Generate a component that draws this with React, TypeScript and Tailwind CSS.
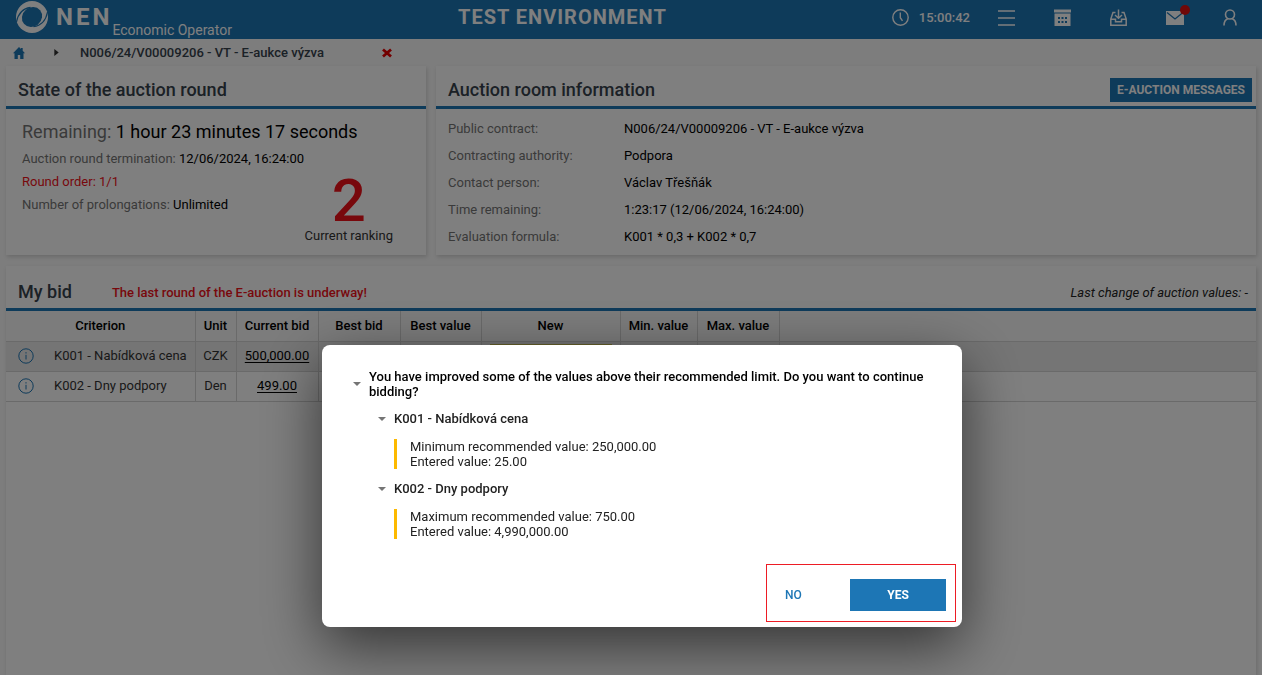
import React, { useState } from 'react';

type BidRow = {
    id: string;
    criterion: string;
    unit: string;
    current: string;
    entered: string;
};

type Warning = {
    title: string;
    limit: string;
    entered: string;
};

const CONTRACT = 'N006/24/V00009206 - VT - E-aukce výzva';

const ROOM_INFO = [
    { label: 'Public contract:', value: CONTRACT },
    { label: 'Contracting authority:', value: 'Podpora' },
    { label: 'Contact person:', value: 'Václav Třešňák' },
    { label: 'Time remaining:', value: '1:23:17 (12/06/2024, 16:24:00)' },
    { label: 'Evaluation formula:', value: 'K001 * 0,3 + K002 * 0,7' },
];

const BID_ROWS: BidRow[] = [
    { id: 'K001', criterion: 'K001 - Nabídková cena', unit: 'CZK', current: '500,000.00', entered: '25.00' },
    { id: 'K002', criterion: 'K002 - Dny podpory', unit: 'Den', current: '499.00', entered: '4,990,000.00' },
];

const WARNINGS: Warning[] = [
    {
        title: 'K001 - Nabídková cena',
        limit: 'Minimum recommended value: 250,000.00',
        entered: 'Entered value: 25.00',
    },
    {
        title: 'K002 - Dny podpory',
        limit: 'Maximum recommended value: 750.00',
        entered: 'Entered value: 4,990,000.00',
    },
];

const Logo = () => (
    <svg className="h-8 w-8" viewBox="0 0 32 32" aria-hidden="true">
        <circle cx="16" cy="16" r="16" fill="currentColor" />
        <ellipse cx="16" cy="16" rx="10.500" ry="9.500" transform="rotate(-40 16 16)" fill="#1d76b5" />
        <path
            d="M0.500 21C2 13 6 7.500 14.500 6.300M31.500 11C30 19 26 24.500 17.500 25.700"
            fill="none"
            stroke="#1d76b5"
            strokeWidth="1.200"
        />
    </svg>
);

const ClockIcon = () => (
    <svg className="h-[17px] w-[17px]" viewBox="0 0 17 17" fill="none" stroke="currentColor" strokeWidth="1.400" aria-hidden="true">
        <circle cx="8.500" cy="8.500" r="7.700" />
        <path d="M8.300 3.500v5.200l2.200 3.200" />
    </svg>
);

const MenuIcon = () => (
    <svg className="h-[17px] w-[17px]" viewBox="0 0 17 17" fill="none" stroke="currentColor" strokeWidth="1.500" aria-hidden="true">
        <path d="M0 2h17M0 9h17M0 16h17" />
    </svg>
);

const CalendarIcon = () => (
    <svg className="h-[17px] w-[17px]" viewBox="0 0 17 17" fill="currentColor" aria-hidden="true">
        <path d="M0 .500h17v3H0z" />
        <path
            fillRule="evenodd"
            d="M.500 4.500h16V17H.500zM4 8v2h2V8zm3.500 0v2h2V8zM11 8v2h2V8zM4 12v2h2v-2zm3.500 0v2h2v-2zM11 12v2h2v-2z"
        />
    </svg>
);

const InboxIcon = () => (
    <svg className="h-[17px] w-[17px]" viewBox="0 0 17 17" fill="none" stroke="currentColor" strokeWidth="1.500" aria-hidden="true">
        <path d="M5.500 3.500H3L.8 10v6.200h15.400V10L14 3.500h-2.500M.8 10.200h4.700v2.500h6v-2.500h4.700" />
        <path d="M8.500 .500v8.500M5 6l3.500 3.300L12 6" />
    </svg>
);

const MailIcon = () => (
    <svg className="h-[14px] w-[18px]" viewBox="0 0 18 14" fill="currentColor" aria-hidden="true">
        <path d="M0 0h18v14H0z" />
        <path d="M1 1.500l8 6.500 8-6.500" fill="none" stroke="#1d76b5" strokeWidth="1.300" />
    </svg>
);

const UserIcon = () => (
    <svg className="h-[17px] w-[14px]" viewBox="0 0 14 17" fill="none" stroke="currentColor" strokeWidth="1.600" aria-hidden="true">
        <circle cx="7" cy="5.500" r="4.500" />
        <path d="M1 16.500c0-3.500 1.600-6 4-7M13 16.500c0-3.500-1.600-6-4-7" />
    </svg>
);

const HomeIcon = () => (
    <svg className="h-3 w-3" viewBox="0 0 12 12" fill="currentColor" aria-hidden="true">
        <path d="M6 0l2 2V1h1.700v2.700L12 6.200h-1.500V12H7.200V8H4.800v4H1.500V6.200H0z" />
    </svg>
);

const CloseIcon = () => (
    <svg className="h-[10px] w-[10px]" viewBox="0 0 10 10" stroke="currentColor" strokeWidth="2.800" aria-hidden="true">
        <path d="M1 1.500l8 7M9 1.500l-8 7" />
    </svg>
);

const InfoIcon = () => (
    <svg className="h-4 w-4" viewBox="0 0 16 16" fill="none" stroke="currentColor" aria-hidden="true">
        <circle cx="8" cy="8" r="7.200" />
        <path d="M8 6.800v4.700M8 4.200v1.300" />
    </svg>
);

const Caret = () => (
    <svg className="h-1 w-2 shrink-0" viewBox="0 0 8 4" fill="#757575" aria-hidden="true">
        <path d="M0 0h8L4 4z" />
    </svg>
);

const Header = () => (
    <header className="flex h-[39px] shrink-0 items-center bg-[#1d76b5] text-white">
        <div className="flex h-full w-[458px] items-start pt-px pl-4">
            <Logo />
            <span className="ml-2 text-[24px] leading-8 font-bold tracking-[3px]">NEN</span>
            <span className="mt-[19px] text-[14px] leading-5">Economic Operator</span>
        </div>
        <div className="mb-1.5 text-[20px] leading-6 font-bold tracking-wider">TEST ENVIRONMENT</div>
        <div className="mb-1 flex flex-1 items-center justify-end pr-[25px]">
            <ClockIcon />
            <time className="ml-[10px] text-[13px] font-medium">15:00:42</time>
            <nav className="ml-7 flex items-center gap-[39px]">
                <button aria-label="Menu"><MenuIcon /></button>
                <button aria-label="Calendar"><CalendarIcon /></button>
                <button aria-label="Inbox"><InboxIcon /></button>
                <button aria-label="Messages" className="relative">
                    <MailIcon />
                    <span className="absolute -top-1.5 -right-1.5 h-2.5 w-2.5 rounded-full bg-[#e01010]" />
                </button>
                <button aria-label="User"><UserIcon /></button>
            </nav>
        </div>
    </header>
);

const Breadcrumb = () => (
    <nav className="flex h-[27px] shrink-0 items-center pl-[13px]">
        <a href="#" aria-label="Home" className="text-[#1d76b5]"><HomeIcon /></a>
        <svg className="ml-[29px] h-[7px] w-[5px]" viewBox="0 0 5 8" fill="#333" aria-hidden="true">
            <path d="M0 0l5 4-5 4z" />
        </svg>
        <a href="#" className="ml-[21px] font-medium text-[#37424d]">{CONTRACT}</a>
        <button aria-label="Close" className="ml-[58px] text-[#e60000]"><CloseIcon /></button>
    </nav>
);

const StatePanel = () => (
    <section className="flex w-[420px] shrink-0 flex-col bg-white shadow-[1px_2px_4px_rgba(0,0,0,0.15)]">
        <h2 className="flex h-[43px] items-center border-b-3 border-[#1d76b5] px-3 pt-1.5 text-[18px] font-medium text-[#37424d]">
            State of the auction round
        </h2>
        <div className="flex flex-1 flex-col px-4 pt-[10px] pb-[11px] text-[#757575]">
            <p className="text-[18px] leading-[26px]">
                Remaining: <span className="text-black">1 hour 23 minutes 17 seconds</span>
            </p>
            <div className="flex flex-1 justify-between">
                <div className="pt-0.5 leading-[23px]">
                    <p>Auction round termination: <span className="text-black">12/06/2024, 16:24:00</span></p>
                    <p className="text-[#f01018]">Round order: 1/1</p>
                    <p>Number of prolongations: <span className="text-black">Unlimited</span></p>
                </div>
                <div className="flex flex-col items-center justify-end pr-[17px] text-[#333]">
                    <span className="text-[60px] leading-[54px] font-medium text-[#f01018]">2</span>
                    <span className="leading-4">Current ranking</span>
                </div>
            </div>
        </div>
    </section>
);

const RoomPanel = () => (
    <section className="flex-1 bg-white shadow-[1px_2px_4px_rgba(0,0,0,0.15)]">
        <div className="flex h-[43px] items-center justify-between border-b-3 border-[#1d76b5] pt-1.5 pr-1 pl-3">
            <h2 className="text-[18px] font-medium text-[#37424d]">Auction room information</h2>
            <button className="mt-0.5 h-6 bg-[#1d76b5] px-[7px] text-[12px] font-bold text-white">E-AUCTION MESSAGES</button>
        </div>
        <dl className="grid grid-cols-[176px_1fr] gap-y-[7px] px-3 pt-[10px] pb-2 leading-5">
            {ROOM_INFO.map(item => (
                <React.Fragment key={item.label}>
                    <dt className="text-[#757575]">{item.label}</dt>
                    <dd className="text-black">{item.value}</dd>
                </React.Fragment>
            ))}
        </dl>
    </section>
);

const BidPanel = () => (
    <section className="flex-1 bg-white shadow-[1px_2px_4px_rgba(0,0,0,0.15)]">
        <div className="flex h-[45px] items-center border-b-3 border-[#1d76b5] px-3 pt-2 pr-2">
            <h2 className="text-[18px] font-medium text-[#37424d]">My bid</h2>
            <span className="ml-10 pt-[3px] font-medium text-[#f01018]">The last round of the E-auction is underway!</span>
            <span className="ml-auto pt-[3px] text-[#222] italic">Last change of auction values: -</span>
        </div>
        <table className="w-full table-fixed border-collapse text-center">
            <colgroup>
                <col className="w-[38px]" />
                <col className="w-[151px]" />
                <col className="w-[41px]" />
                <col className="w-[82px]" />
                <col className="w-[82px]" />
                <col className="w-[81px]" />
                <col className="w-[139px]" />
                <col className="w-[77px]" />
                <col className="w-[82px]" />
                <col />
            </colgroup>
            <thead>
                <tr className="h-[30px] border-b border-[#d4d4d4] bg-[#f8f8f8] text-black [&>th]:border-r [&>th]:border-[#d4d4d4] [&>th]:font-medium [&>th:last-child]:border-r-0">
                    <th colSpan={2}>Criterion</th>
                    <th>Unit</th>
                    <th>Current bid</th>
                    <th>Best bid</th>
                    <th>Best value</th>
                    <th>New</th>
                    <th>Min. value</th>
                    <th>Max. value</th>
                    <th></th>
                </tr>
            </thead>
            <tbody>
                {BID_ROWS.map(row => (
                    <tr
                        key={row.id}
                        className="h-[30px] border-b border-[#d4d4d4] text-[#333] odd:bg-[#ebebeb] [&>td]:border-r [&>td]:border-[#d4d4d4] [&>td:first-child]:border-r-0 [&>td:last-child]:border-r-0"
                    >
                        <td>
                            <button aria-label={`Info ${row.id}`} className="block pl-3 text-[#1d76b5]"><InfoIcon /></button>
                        </td>
                        <td className="pl-[10px] text-left whitespace-nowrap">{row.criterion}</td>
                        <td>{row.unit}</td>
                        <td><a href="#" className="text-black underline underline-offset-2">{row.current}</a></td>
                        <td></td>
                        <td></td>
                        <td className="px-2">
                            <input
                                aria-label={`New ${row.id}`}
                                defaultValue={row.entered}
                                className="block h-6 w-full border border-[#c8be50] bg-white px-1 text-right"
                            />
                        </td>
                        <td></td>
                        <td></td>
                        <td></td>
                    </tr>
                ))}
            </tbody>
        </table>
    </section>
);

const ConfirmDialog = ({ onClose }: { onClose: () => void }) => (
    <div className="fixed inset-0 flex items-end justify-center bg-black/50 pb-12 pl-[22px]">
        <div
            role="dialog"
            aria-modal="true"
            aria-labelledby="dialog-title"
            className="w-[640px] rounded-lg bg-white pt-6 pr-1.5 pb-[5px] pl-[31px] leading-[15px] text-[#222] shadow-[0_19px_60px_rgba(0,0,0,0.6)]"
        >
            <div className="flex items-center gap-2 pr-6">
                <Caret />
                <h3 id="dialog-title" className="font-medium text-black">
                    You have improved some of the values above their recommended limit. Do you want to continue bidding?
                </h3>
            </div>
            <ul className="pt-3 pl-[25px]">
                {WARNINGS.map(warning => (
                    <li key={warning.title} className="pb-3">
                        <div className="flex items-center gap-2">
                            <Caret />
                            <h4 className="font-medium">{warning.title}</h4>
                        </div>
                        <div className="mt-[13px] ml-4 border-l-3 border-[#fdb900] pl-[13px]">
                            <p>{warning.limit}</p>
                            <p>{warning.entered}</p>
                        </div>
                    </li>
                ))}
            </ul>
            <div className="mt-[13px] ml-auto flex w-[190px] items-center justify-between border border-[#ed1c24] pt-[14px] pr-[9px] pb-[10px] pl-[10px]">
                <button onClick={onClose} className="h-8 px-2 text-[12px] font-medium text-[#1d76b5]">NO</button>
                <button onClick={onClose} className="h-8 w-24 bg-[#1d76b5] text-[12px] font-bold text-white">YES</button>
            </div>
        </div>
    </div>
);

const App: React.FC = () => {
    const [dialogOpen, setDialogOpen] = useState(true);

    return (
        <div className="flex min-h-screen flex-col bg-[#fafafa] font-['Roboto','Liberation_Sans',sans-serif] text-[13px]">
            <Header />
            <Breadcrumb />
            <main className="flex flex-1 flex-col gap-[11px] px-1.5">
                <div className="flex gap-[10px]">
                    <StatePanel />
                    <RoomPanel />
                </div>
                <BidPanel />
            </main>
            {dialogOpen && <ConfirmDialog onClose={() => setDialogOpen(false)} />}
        </div>
    );
};

export default App;
